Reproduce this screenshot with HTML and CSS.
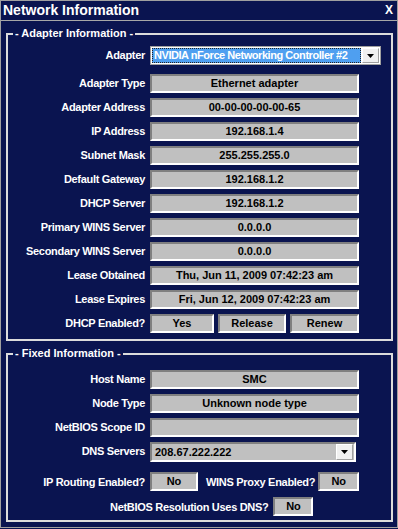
FILE: index.html
```html
<!DOCTYPE html>
<html lang="en">
<head>
  <meta charset="UTF-8">
  <title>Network Information</title>
  <link rel="stylesheet" href="styles.css">
</head>
<body>

<div class="window">
  <div class="titlebar">
    <span class="title">Network Information</span>
    <span class="close">X</span>
  </div>

  <section class="group group-adapter">
    <div class="group-head"><span>- Adapter Information -</span></div>
    <div class="group-body">
      <div class="form">
        <label class="first">Adapter</label>
        <div class="select select-focus first">
          <span class="select-text">NVIDIA nForce Networking Controller #2</span>
          <span class="drop"><svg width="7" height="4" viewBox="0 0 7 4"><path d="M0 0h7L3.5 4z" fill="#000"/></svg></span>
        </div>

        <label>Adapter Type</label><div class="field">Ethernet adapter</div>
        <label>Adapter Address</label><div class="field">00-00-00-00-00-65</div>
        <label>IP Address</label><div class="field">192.168.1.4</div>
        <label>Subnet Mask</label><div class="field">255.255.255.0</div>
        <label>Default Gateway</label><div class="field">192.168.1.2</div>
        <label>DHCP Server</label><div class="field">192.168.1.2</div>
        <label>Primary WINS Server</label><div class="field">0.0.0.0</div>
        <label>Secondary WINS Server</label><div class="field">0.0.0.0</div>
        <label>Lease Obtained</label><div class="field">Thu, Jun 11, 2009 07:42:23 am</div>
        <label>Lease Expires</label><div class="field">Fri, Jun 12, 2009 07:42:23 am</div>
        <label>DHCP Enabled?</label>
        <div class="buttons">
          <span class="field btn-yes">Yes</span>
          <span class="field btn-release">Release</span>
          <span class="field btn-renew">Renew</span>
        </div>
      </div>
    </div>
  </section>

  <section class="group group-fixed">
    <div class="group-head"><span>- Fixed Information -</span></div>
    <div class="group-body">
      <div class="form">
        <label>Host Name</label><div class="field">SMC</div>
        <label>Node Type</label><div class="field">Unknown node type</div>
        <label>NetBIOS Scope ID</label><div class="field"></div>
        <label>DNS Servers</label>
        <div class="select select-dns">
          <span class="select-text">208.67.222.222</span>
          <span class="drop"><svg width="7" height="4" viewBox="0 0 7 4"><path d="M0 0h7L3.5 4z" fill="#000"/></svg></span>
        </div>
      </div>

      <div class="flag-row">
        <label class="flag-label">IP Routing Enabled?</label>
        <span class="field flag-ip">No</span>
        <label class="wins-label">WINS Proxy Enabled?</label>
        <span class="field flag-wins">No</span>
      </div>

      <div class="flag-row flag-center">
        <label>NetBIOS Resolution Uses DNS?</label>
        <span class="field flag-dns">No</span>
      </div>
    </div>
  </section>
</div>

</body>
</html>
```

FILE: styles.css
```css
body {
  margin: 0;
  background-color: #0a1450;
  font-family: 'Liberation Sans', Arial, sans-serif;
  font-size: 11px;
  font-weight: bold;
  color: #fff;
}

.window {
  width: 398px;
  height: 528px;
  box-sizing: border-box;
  border: 1px solid #a0a0a0;
  background-color: #0a1450;
}

.titlebar {
  height: 19px;
  border-bottom: 1px solid #a8a8a8;
  display: flex;
  justify-content: space-between;
  align-items: center;
  padding: 0 4px 0 2px;
}

.title {
  font-size: 14px;
  line-height: 19px;
}

.close {
  font-size: 12px;
  line-height: 19px;
}

/* group box: header line with caption, then bordered body */
.group {
  margin: 6px 4px 0 5px;
}

.group-head {
  display: flex;
  height: 13px;
  line-height: 13px;
}

.group-head::before,
.group-head::after {
  content: '';
  box-sizing: border-box;
  margin-top: 6px;
  border-top: 2px solid #dcdcdc;
}

.group-head::before {
  width: 7px;
  border-left: 2px solid #dcdcdc;
}

.group-head::after {
  flex: 1;
  border-right: 2px solid #dcdcdc;
}

.group-head span {
  padding: 0 2px;
  white-space: nowrap;
}

.group-body {
  border: 2px solid #dcdcdc;
  border-top: none;
  padding: 6px 0 6px 5px;
}

.group-fixed .group-body {
  padding: 10px 0 4px 5px;
}

.form {
  display: grid;
  grid-template-columns: 132px 209px;
  grid-auto-rows: 19px;
  column-gap: 5px;
  row-gap: 5px;
}

.group-adapter .form {
  grid-template-rows: 23px;
}

.form label {
  text-align: right;
  line-height: 19px;
  white-space: nowrap;
  letter-spacing: -0.3px;
}

.form .first {
  align-self: start;
}

.field {
  box-sizing: border-box;
  height: 19px;
  background-color: #c0c0c0;
  border-top: 2px solid #808080;
  border-left: 2px solid #808080;
  border-bottom: 2px solid #fff;
  border-right: 2px solid #fff;
  color: #000;
  text-align: center;
  line-height: 15px;
  white-space: nowrap;
  overflow: hidden;
}

.buttons {
  display: flex;
  gap: 4px;
}

.btn-yes { width: 64px; }
.btn-release { width: 68px; }
.btn-renew { width: 69px; }

.select {
  box-sizing: border-box;
  display: flex;
  align-items: stretch;
  height: 19px;
}

.select-focus {
  width: 231px;
  border: 1px solid #a0a0a0;
  background-color: #fff;
  padding: 1px;
}

.select-focus .select-text {
  flex: 1;
  background-color: #4f9ff0;
  outline: 1px dotted #222;
  outline-offset: -1px;
  color: #fff;
  padding-left: 2px;
  line-height: 15px;
  letter-spacing: -0.45px;
  white-space: nowrap;
  overflow: hidden;
}

.select-dns {
  width: 206px;
  height: 20px;
  background-color: #c0c0c0;
  border-top: 2px solid #808080;
  border-left: 2px solid #808080;
  border-bottom: 2px solid #fff;
  border-right: 2px solid #fff;
}

.select-dns .select-text {
  flex: 1;
  color: #000;
  padding-left: 3px;
  line-height: 16px;
}

.drop {
  width: 17px;
  box-sizing: border-box;
  background-color: #f0f0f0;
  border: 1px solid #fff;
  border-right-color: #a0a0a0;
  border-bottom-color: #a0a0a0;
  display: flex;
  align-items: center;
  justify-content: center;
  margin-left: 1px;
}

.select-dns .drop {
  margin: 0 1px 0 0;
}

.flag-row {
  display: flex;
  align-items: center;
  margin-top: 11px;
  height: 19px;
}

.flag-row label {
  letter-spacing: -0.3px;
  white-space: nowrap;
}

.flag-label {
  width: 132px;
  text-align: right;
  margin-right: 5px;
}

.flag-ip {
  width: 48px;
}

.wins-label {
  margin-left: 8px;
  margin-right: 3px;
}

.flag-wins {
  width: 41px;
}

.flag-center {
  margin-top: 6px;
  padding-left: 97px;
}

.flag-dns {
  width: 40px;
  margin-left: 5px;
}
```
